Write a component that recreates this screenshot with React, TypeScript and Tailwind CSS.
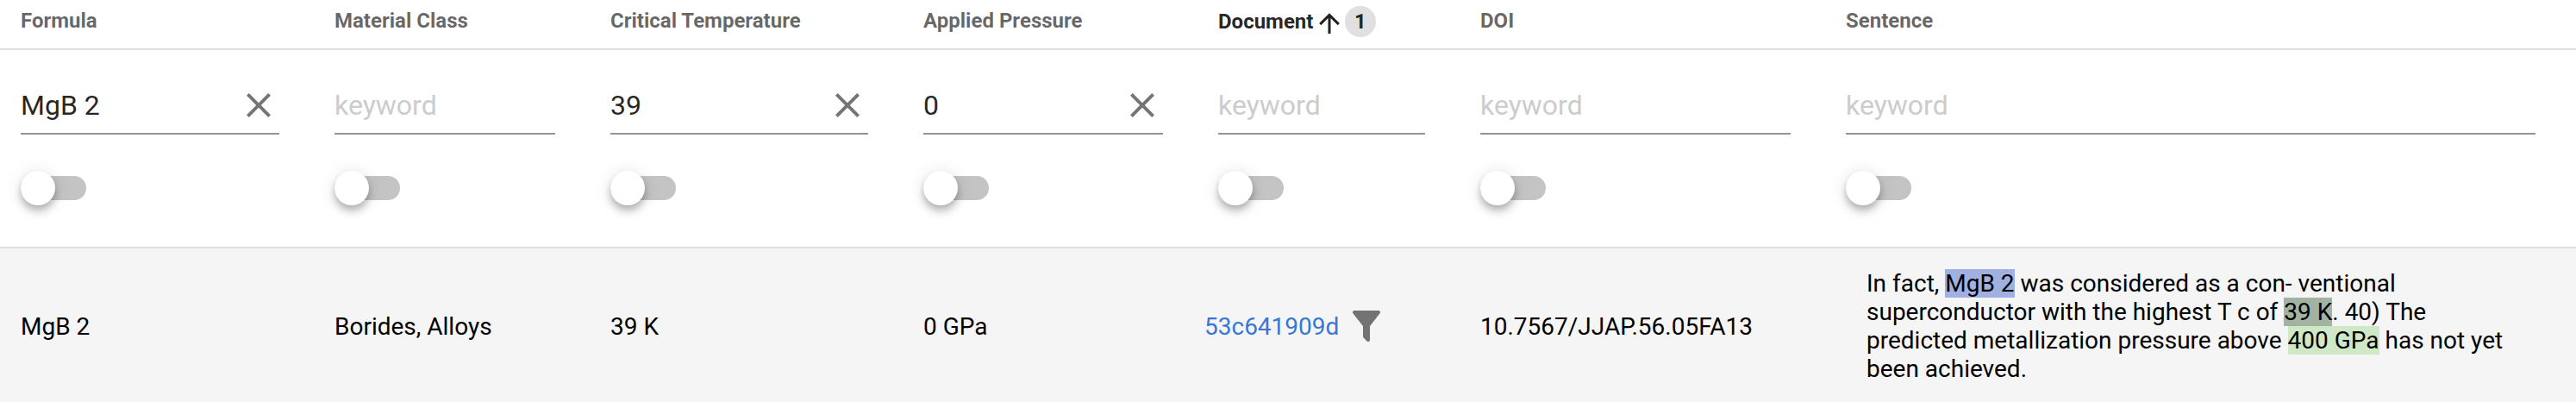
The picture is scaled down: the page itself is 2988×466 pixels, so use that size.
type Column = { title: string; value?: string; sorted?: boolean };

const columns: Column[] = [
  { title: "Formula", value: "MgB 2" },
  { title: "Material Class" },
  { title: "Critical Temperature", value: "39" },
  { title: "Applied Pressure", value: "0" },
  { title: "Document", sorted: true },
  { title: "DOI" },
  { title: "Sentence" },
];

const icons = {
  arrowUp:
    "M13,20H11V8L5.5,13.5L4.08,12.08L12,4.16L19.92,12.08L18.5,13.5L13,8V20Z",
  close:
    "M19,6.41L17.59,5L12,10.59L6.41,5L5,6.41L10.59,12L5,17.59L6.41,19L12,13.41L17.59,19L19,17.59L13.41,12L19,6.41Z",
  filter:
    "M14,12V19.88C14.04,20.18 13.94,20.5 13.71,20.71C13.32,21.1 12.69,21.1 12.3,20.71L10.29,18.7C10.06,18.47 9.96,18.16 10,17.87V12H9.97L4.21,4.62C3.87,4.19 3.95,3.56 4.38,3.22C4.57,3.08 4.78,3 5,3H19C19.22,3 19.43,3.08 19.62,3.22C20.05,3.56 20.13,4.19 19.79,4.62L14.03,12H14Z",
};

function Icon({ name, className }: { name: keyof typeof icons; className: string }) {
  return (
    <svg viewBox="0 0 24 24" fill="currentColor" className={`shrink-0 ${className}`}>
      <path d={icons[name]} />
    </svg>
  );
}

const grid =
  "grid grid-cols-[300px_256px_299px_278px_240px_360px_800px] gap-x-16 pl-6";

function HeaderCell({ title, sorted }: Column) {
  if (sorted) {
    return (
      <div className="flex h-14 items-center pb-1.5 text-black/87">
        <span className="w-[111px]">{title}</span>
        <Icon name="arrowUp" className="mt-1 size-9" />
        <span className="flex size-9 items-center justify-center rounded-full bg-[#e0e0e0]">
          1
        </span>
      </div>
    );
  }
  return <div className="flex h-14 items-center pb-2">{title}</div>;
}

function Switch() {
  return (
    <div className="mt-[42px] flex h-10 w-[76px] items-center">
      <span className="z-10 size-10 shrink-0 rounded-full bg-white shadow-[0_4px_8px_-2px_rgba(0,0,0,0.2),0_8px_10px_0_rgba(0,0,0,0.14),0_2px_20px_0_rgba(0,0,0,0.12)]" />
      <span className="-ml-10 h-7 w-[76px] rounded-full bg-[#c4c4c4]" />
    </div>
  );
}

function FilterCell({ value }: Column) {
  return (
    <div>
      <div className="mt-8 flex h-[66px] items-center justify-between border-b-2 border-[#949494] text-[32px]">
        {value ? (
          <>
            <span className="text-black/87">{value}</span>
            <Icon name="close" className="size-12 text-[#757575]" />
          </>
        ) : (
          <span className="text-[#cccccc]">keyword</span>
        )}
      </div>
      <Switch />
    </div>
  );
}

export default function App() {
  return (
    <div className="h-[466px] w-[2988px] overflow-hidden bg-white font-['Roboto',sans-serif] text-[28px] leading-[33px] text-black">
      <div className={`${grid} h-[58px] border-b-2 border-[#e0e0e0] text-2xl font-bold text-black/60`}>
        {columns.map((c) => (
          <HeaderCell key={c.title} {...c} />
        ))}
      </div>
      <div className={`${grid} h-[230px] border-b-2 border-[#e0e0e0]`}>
        {columns.map((c) => (
          <FilterCell key={c.title} {...c} />
        ))}
      </div>
      <div className={`${grid} h-[178px] items-center bg-[#f5f5f5] pt-0.5`}>
        <div>MgB 2</div>
        <div>Borides, Alloys</div>
        <div>39 K</div>
        <div>0 GPa</div>
        <div className="-ml-4 flex items-center">
          <a className="text-[#3877d3]">53c641909d</a>
          <Icon name="filter" className="ml-2 size-12 text-[#737373]" />
        </div>
        <div>10.7567/JJAP.56.05FA13</div>
        <div className="px-6">
          In fact, <span className="bg-[#9fb0e1]">MgB 2</span> was considered as a con- ventional
          superconductor with the highest T c of <span className="bg-[#a3b3a2]">39 K</span>. 40) The
          predicted metallization pressure above <span className="bg-[#cfe8c5]">400 GPa</span> has not yet
          been achieved.
        </div>
      </div>
    </div>
  );
}
